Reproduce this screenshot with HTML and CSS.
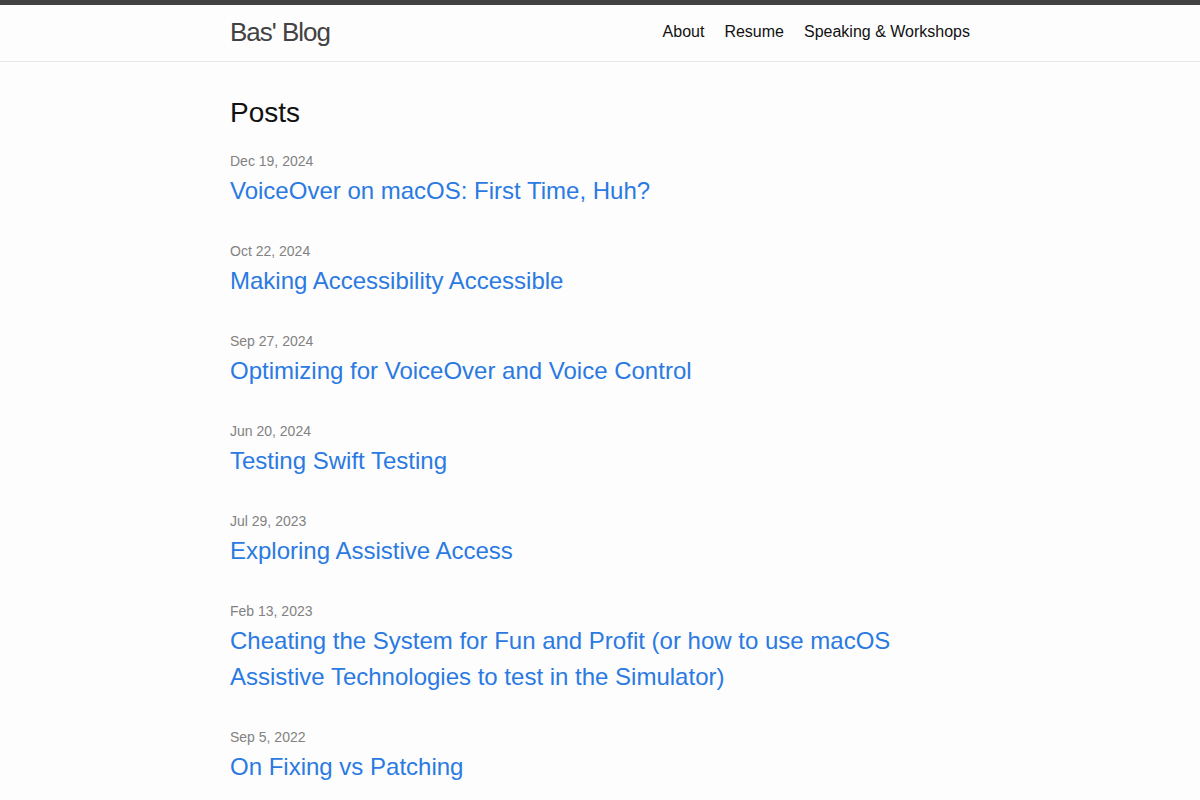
FILE: index.html
```html
<!DOCTYPE html>
<html lang="en">
    <head>
        <meta charset="UTF-8" />
        <title>Bas' Blog</title>
        <link rel="stylesheet" href="styles.css">
    </head>
    <body>
        <header class="site-header">
            <div class="wrapper header-row">
                <a class="site-title" href="#">Bas' Blog</a>
                <nav class="site-nav">
                    <a class="page-link" href="#">About</a>
                    <a class="page-link" href="#">Resume</a>
                    <a class="page-link" href="#">Speaking &amp; Workshops</a>
                </nav>
            </div>
        </header>

        <main class="page-content">
            <div class="wrapper">
                <h2 class="post-list-heading">Posts</h2>
                <ul class="post-list">
                    <li>
                        <span class="post-meta">Dec 19, 2024</span>
                        <h3><a class="post-link" href="#">VoiceOver on macOS: First Time, Huh?</a></h3>
                    </li>
                    <li>
                        <span class="post-meta">Oct 22, 2024</span>
                        <h3><a class="post-link" href="#">Making Accessibility Accessible</a></h3>
                    </li>
                    <li>
                        <span class="post-meta">Sep 27, 2024</span>
                        <h3><a class="post-link" href="#">Optimizing for VoiceOver and Voice Control</a></h3>
                    </li>
                    <li>
                        <span class="post-meta">Jun 20, 2024</span>
                        <h3><a class="post-link" href="#">Testing Swift Testing</a></h3>
                    </li>
                    <li>
                        <span class="post-meta">Jul 29, 2023</span>
                        <h3><a class="post-link" href="#">Exploring Assistive Access</a></h3>
                    </li>
                    <li>
                        <span class="post-meta">Feb 13, 2023</span>
                        <h3><a class="post-link" href="#">Cheating the System for Fun and Profit (or how to use macOS Assistive Technologies to test in the Simulator)</a></h3>
                    </li>
                    <li>
                        <span class="post-meta">Sep 5, 2022</span>
                        <h3><a class="post-link" href="#">On Fixing vs Patching</a></h3>
                    </li>
                </ul>
            </div>
        </main>
    </body>
</html>
```

FILE: styles.css
```css
body {
    margin: 0;
    font: 400 16px/1.5 "Liberation Sans", Arial, sans-serif;
    color: #111;
    background-color: #fdfdfd;
}

h2, h3, ul, li {
    margin: 0;
    padding: 0;
}

a {
    color: #2a7ae2;
    text-decoration: none;
}

.wrapper {
    max-width: 740px;
    margin: 0 auto;
    padding: 0 30px;
}

.site-header {
    border-top: 5px solid #424242;
    border-bottom: 1px solid #e8e8e8;
    min-height: 55.95px;
}

.header-row {
    display: flex;
    justify-content: space-between;
}

.site-title {
    font-size: 26px;
    font-weight: 300;
    line-height: 54px;
    letter-spacing: -1px;
    color: #424242;
}

.site-nav {
    display: flex;
    gap: 20px;
    line-height: 54px;
}

.page-link {
    color: #111;
}

.page-content {
    padding: 30px 0;
}

.post-list-heading {
    font-size: 28px;
    font-weight: 400;
    margin-bottom: 15px;
}

.post-list {
    list-style: none;
}

.post-list > li {
    margin-bottom: 30px;
}

.post-meta {
    font-size: 14px;
    color: #828282;
}

.post-list h3 {
    font-weight: 400;
}

.post-link {
    display: block;
    font-size: 24px;
    max-width: 680px;
}
```
